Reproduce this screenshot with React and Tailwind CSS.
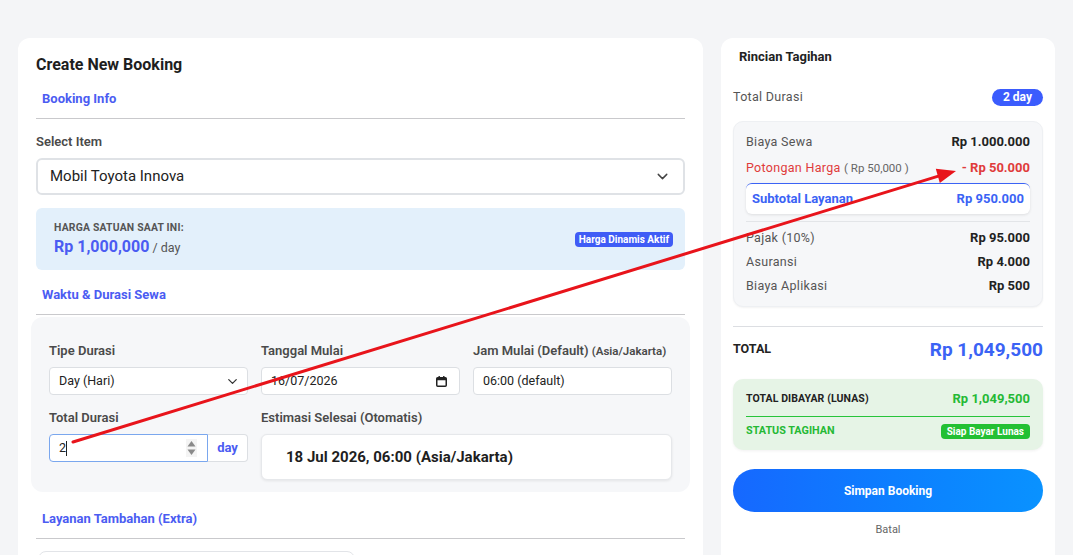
import React from "react";
import { ChevronDown } from "lucide-react";

function SectionHeader({ children, pt = "pt-[17px]" }) {
  return (
    <div className={`${pt} pb-[11px] px-[6px] border-b border-[#c9c9cc]`}>
      <div className="text-[13px] leading-[16px] font-bold text-[#4b5cf2]">{children}</div>
    </div>
  );
}

function Label({ children }) {
  return <div className="text-[13px] leading-[16px] font-semibold text-[#4a4a4a] mb-[8px] whitespace-nowrap">{children}</div>;
}

function Row({ label, value, labelCls = "text-[#555]", valueCls = "text-[#222]" }) {
  return (
    <div className="flex items-center justify-between leading-[16px]">
      <span className={`text-[12.5px] tracking-[0.3px] ${labelCls}`}>{label}</span>
      <span className={`text-[13px] font-bold ${valueCls}`}>{value}</span>
    </div>
  );
}

export default function App() {
  return (
    <div className="relative h-[555px] overflow-hidden bg-[#f4f5f7] font-['Roboto',sans-serif]">
      <div className="flex gap-[18px] px-[18px] pt-[38px]">
        {/* Left card */}
        <div className="w-[685px] shrink-0 bg-white rounded-[12px] px-[18px] pt-[17px] h-[600px]">
          <div className="text-[16px] leading-[20px] font-bold text-[#1e1e1e]">Create New Booking</div>
          <SectionHeader pt="pt-[16px]">Booking Info</SectionHeader>

          <div className="mt-[15px] text-[13px] leading-[16px] font-semibold text-[#4a4a4a]">Select Item</div>
          <div className="mt-[8px] h-[37px] border-2 border-[#dfe2e6] rounded-[6px] flex items-center justify-between pl-[12px] pr-[12px]">
            <span className="text-[15px] text-[#222]">Mobil Toyota Innova</span>
            <ChevronDown size={17} strokeWidth={2} className="text-[#444]" />
          </div>

          <div className="mt-[13px] h-[62px] bg-[#e3f0fb] rounded-[6px] flex items-center justify-between pl-[18px] pr-[12px]">
            <div>
              <div className="text-[10.4px] leading-[12px] font-bold text-[#555] tracking-[0.2px]">HARGA SATUAN SAAT INI:</div>
              <div className="mt-[4px] leading-[18px] whitespace-nowrap">
                <span className="text-[16px] font-bold text-[#4b5cf2]">Rp 1,000,000</span>
                <span className="text-[12.5px] text-[#555]"> / day</span>
              </div>
            </div>
            <span className="mt-[1px] bg-[#3f5cf6] text-white text-[10px] leading-[15px] font-bold px-[4px] rounded-[4px]">Harga Dinamis Aktif</span>
          </div>

          <SectionHeader>Waktu &amp; Durasi Sewa</SectionHeader>

          <div className="-mx-[5px] mt-[2px] bg-[#f6f7f9] rounded-[12px] px-[18px] pt-[26px] pb-[12px]">
            <div className="grid grid-cols-3 gap-x-[13px]">
              <div>
                <Label>Tipe Durasi</Label>
                <div className="h-[28px] bg-white border border-[#dcdfe3] rounded-[4px] flex items-center justify-between pl-[9px] pr-[7px]">
                  <span className="text-[12.5px] text-[#222]">Day (Hari)</span>
                  <ChevronDown size={15} strokeWidth={2} className="text-[#333]" />
                </div>
              </div>
              <div>
                <Label>Tanggal Mulai</Label>
                <div className="h-[28px] bg-white border border-[#dcdfe3] rounded-[4px] flex items-center justify-between pl-[9px] pr-[12px]">
                  <span className="text-[12.5px] text-[#222]">16/07/2026</span>
                  <svg width="11" height="11" viewBox="0 0 11 11">
                    <rect x="0.75" y="1.75" width="9.5" height="8.5" rx="1" fill="none" stroke="#222" strokeWidth="1.5" />
                    <rect x="0.75" y="1.75" width="9.5" height="2.5" fill="#222" />
                    <rect x="2.5" y="0" width="1.4" height="2.5" fill="#222" />
                    <rect x="7.1" y="0" width="1.4" height="2.5" fill="#222" />
                  </svg>
                </div>
              </div>
              <div>
                <Label>
                  Jam Mulai (Default) <span className="text-[11.5px]">(Asia/Jakarta)</span>
                </Label>
                <div className="h-[28px] bg-white border border-[#dcdfe3] rounded-[4px] flex items-center pl-[9px]">
                  <span className="text-[12.5px] text-[#222]">06:00 (default)</span>
                </div>
              </div>

              <div className="mt-[15px]">
                <Label>Total Durasi</Label>
                <div className="flex h-[28px]">
                  <div className="flex-1 bg-white border border-[#7aa7ee] rounded-l-[4px] flex items-center justify-between pl-[9px] pr-[10px]">
                    <span className="text-[12.5px] text-[#222] flex items-center">
                      2<span className="inline-block w-[1px] h-[15px] bg-[#222]" />
                    </span>
                    <svg width="11" height="18" viewBox="0 0 11 18">
                      <rect x="0" y="0" width="11" height="18" fill="#f4f4f4" />
                      <path d="M5.5 2 L9.5 7.5 L1.5 7.5 Z" fill="#8a8a8a" />
                      <path d="M5.5 16 L9.5 10.5 L1.5 10.5 Z" fill="#8a8a8a" />
                    </svg>
                  </div>
                  <div className="w-[40px] bg-white border border-l-0 border-[#dcdfe3] rounded-r-[4px] flex items-center justify-center">
                    <span className="text-[13px] font-bold text-[#4b5cf2]">day</span>
                  </div>
                </div>
              </div>
              <div className="col-span-2 mt-[15px]">
                <Label>Estimasi Selesai (Otomatis)</Label>
                <div className="h-[46px] bg-white border border-[#e6e8eb] rounded-[6px] shadow-[0_1px_3px_rgba(0,0,0,0.08)] flex items-center pl-[24px]">
                  <span className="text-[15px] font-bold text-[#1e1e1e]">18 Jul 2026, 06:00 (Asia/Jakarta)</span>
                </div>
              </div>
            </div>
          </div>

          <SectionHeader pt="pt-[19px]">Layanan Tambahan (Extra)</SectionHeader>
          <div className="mt-[12px] ml-[2px] w-[317px] h-[40px] border border-[#e2e4e8] rounded-[8px]" />
        </div>

        {/* Right card */}
        <div className="w-[334px] shrink-0 bg-white rounded-[12px] px-[12px] pt-[11px] h-[600px]">
          <div className="ml-[6px] text-[13px] leading-[16px] font-bold text-[#222]">Rincian Tagihan</div>
          <div className="mt-[23px] flex items-center justify-between">
            <span className="text-[12.5px] text-[#555] tracking-[0.3px]">Total Durasi</span>
            <span className="bg-[#3b5cfd] text-white text-[12px] font-bold leading-[17px] px-[11px] rounded-full">2 day</span>
          </div>

          <div className="mt-[14px] bg-[#f6f7f9] border border-[#eef0f3] rounded-[10px] shadow-[0_1px_2px_rgba(0,0,0,0.05)] px-[12px] pt-[12px] pb-[12px]">
            <Row label="Biaya Sewa" value="Rp 1.000.000" />
            <div className="mt-[10px] flex items-center justify-between leading-[16px]">
              <span className="text-[12.5px] tracking-[0.3px] text-[#e03b3b]">
                Potongan Harga <span className="text-[11.5px] text-[#666] tracking-normal">( Rp 50,000 )</span>
              </span>
              <span className="text-[13px] font-bold text-[#e03b3b]">- Rp 50.000</span>
            </div>
            <div className="mt-[7px] h-[31px] bg-white border-t border-[#3b63f5] rounded-[6px] shadow-[0_1px_3px_rgba(0,0,0,0.1)] flex items-center justify-between px-[6px]">
              <span className="text-[13px] font-bold text-[#3b63f5]">Subtotal Layanan</span>
              <span className="text-[13px] font-bold text-[#3b63f5]">Rp 950.000</span>
            </div>
            <div className="mt-[7px] border-t border-[#e3e5e8] pt-[8px] flex flex-col gap-[8px]">
              <Row label="Pajak (10%)" value="Rp 95.000" />
              <Row label="Asuransi" value="Rp 4.000" />
              <Row label="Biaya Aplikasi" value="Rp 500" />
            </div>
          </div>

          <div className="mt-[19px] border-t border-[#dcdee2] pt-[11px] flex items-center justify-between">
            <span className="text-[12.5px] font-bold text-[#222]">TOTAL</span>
            <span className="text-[19px] leading-[24px] font-bold text-[#3b63f5]">Rp 1,049,500</span>
          </div>

          <div className="mt-[17px] bg-[#e6f4e6] rounded-[10px] shadow-[0_1px_3px_rgba(0,0,0,0.06)] px-[13px] pt-[10px] pb-[11px]">
            <div className="flex items-center justify-between pb-[8px] border-b border-[#27c43a]">
              <span className="text-[10.5px] font-bold text-[#222] tracking-[0.1px]">TOTAL DIBAYAR (LUNAS)</span>
              <span className="text-[13px] font-bold text-[#25b935]">Rp 1,049,500</span>
            </div>
            <div className="mt-[6px] flex items-center justify-between">
              <span className="text-[10.8px] font-bold text-[#25b935]">STATUS TAGIHAN</span>
              <span className="bg-[#23c033] text-white text-[10px] font-bold leading-[15px] px-[6px] rounded-[4px]">Siap Bayar Lunas</span>
            </div>
          </div>

          <button className="mt-[19px] w-full h-[43px] rounded-full bg-gradient-to-r from-[#1668ff] to-[#0a92ff] text-white text-[12px] font-bold">
            Simpan Booking
          </button>
          <div className="mt-[10px] text-center text-[11px] text-[#666]">Batal</div>
        </div>
      </div>

      {/* annotation arrow */}
      <svg className="absolute inset-0 pointer-events-none" width="1073" height="555" viewBox="0 0 1073 555">
        <line x1="73" y1="442" x2="940" y2="175.6" stroke="#e8141b" strokeWidth="3" strokeLinecap="round" />
        <polygon points="956,171 939.8,183 935.8,168.8" fill="#e8141b" />
      </svg>
    </div>
  );
}
